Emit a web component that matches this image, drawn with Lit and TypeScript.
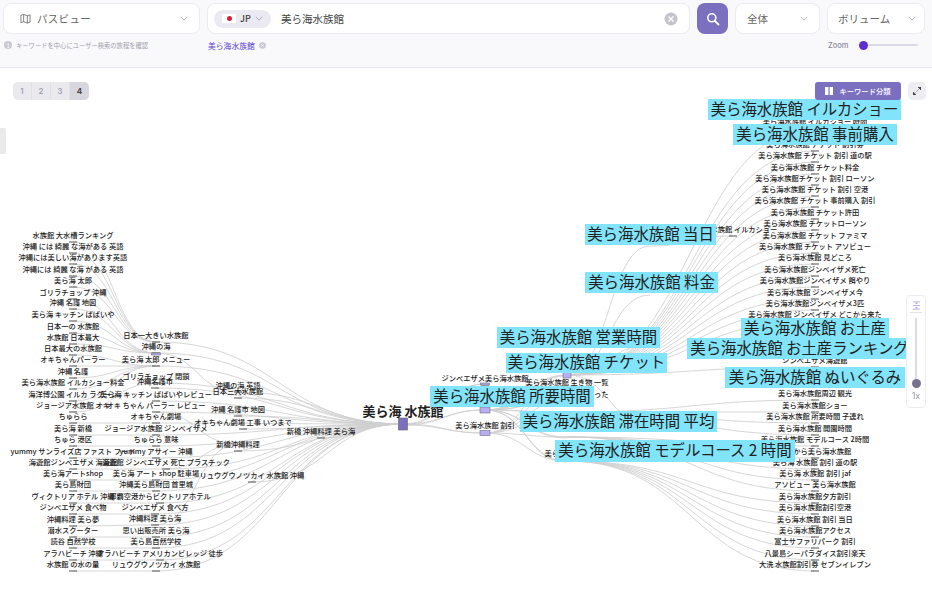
import { LitElement, html, css, svg } from "lit";
import { customElement } from "lit/decorators.js";

type L = [string, number, number, number?];
// text, centre x, label y, bar width
const col1: L[] = [
  ["水族館 大水槽ランキング",73,235],["沖縄 には 綺麗 な海がある 英語",73,246],["沖縄には美しい海があります英語",73,257],["沖縄には 綺麗 な海 がある 英語",73,269],
  ["美ら海 太郎",73,280],["ゴリラチョップ 沖縄",73,292],["沖縄 名護 地図",73,302],["美ら海 キッチン ばばいや",73,314],
  ["日本一の 水族館",73,326],["水族館 日本最大",73,337],["日本最大の水族館",73,348],["オキちゃんパーラー",73,359],
  ["沖縄 名護",73,371],["美ら海水族館 イルカショー料金",73,382],["海洋博公園 イルカ ラグーン",73,394],["ジョージア水族館 オキ",73,405],
  ["ちゅらら",73,416],["美ら海 新橋",73,428],["ちゅら 港区",73,439],["yummy サンライズ店 ファスト フード",73,451],
  ["海遊館ジンベエザメ 海遊館",73,462],["美ら海アートshop",73,473],["美ら島財団",73,484],["ヴィクトリア ホテル 沖縄",73,496],
  ["ジンベエザメ 食べ物",73,507],["沖縄料理 美ら夢",73,519],["潜水スクーター",73,530],["読谷 自然学校",73,541],
  ["アラハビーチ 沖縄",73,553],["水族館 の水の量",73,564],
];
const col2: L[] = [
  ["日本一大きい水族館",156,335],["沖縄の海",156,346],["美ら海 太郎 メニュー",156,359],["ゴリラチョップ 閉鎖",156,376],
  ["沖縄名護市",155,381],["美ら海 キッチン ばばいやレビュー",156,394],["オキ ちゃん パーラー レビュー",156,405],["オキちゃん劇場",156,416],
  ["ジョージア水族館 ジンベイザメ",156,428],["ちゅらら 意味",156,439],["yummy アサイー 沖縄",156,451],["海遊館 ジンベエザメ 死亡 プラスチック",166,462],
  ["美ら海 アート shop 駐車場",156,473],["沖縄美ら島財団 首里城",156,484],["那覇空港からビクトリアホテル",160,496],["ジンベエザメ 食べ方",155,507],
  ["沖縄料理 美ら海",155,518],["思い出販売所 美ら海",156,530],["美ら島自然学校",156,541],["アラハビーチ アメリカンビレッジ 徒歩",160,553],["リュウグウノツカイ 水族館",156,564],
];
const col3: L[] = [
  ["沖縄の海 英語",238,385],["日本三大水族館",238,391],["沖縄 名護市 地図",238,409],["オキちゃん劇場 工事 いつまで",243,422],
  ["新橋沖縄料理",238,444],["リュウグウノツカイ 水族館 沖縄",252,475],
];
const col6: L[] = [
  ["美ら海水族館 イルカショー 時間",815,121],["美ら海水族館 チケット 割引券",815,144],["美ら海水族館 チケット 割引 道の駅",815,155],["美ら海水族館 チケット料金",815,167],
  ["美ら海水族館チケット 割引 ローソン",815,178],["美ら海水族館 チケット 割引 空港",815,189],["美ら海水族館 チケット 事前購入 割引",815,200],["美ら海水族館 チケット許田",815,212],
  ["美ら海水族館 チケットローソン",815,223],["美ら海水族館 チケット ファミマ",815,235],["美ら海水族館 チケット アソビュー",815,246],["美ら海水族館 見どころ",815,257],
  ["美ら海水族館ジンベイザメ死亡",815,269],["美ら海水族館ジンベイザメ 餌やり",815,280],["美ら海水族館 ジンベイザメ今",815,292],["美ら海水族館ジンベイザメ3匹",815,303],
  ["美ら海水族館 ジンベイザメ どこから来た",815,314],["ジンベエザメ海遊館",815,360],["美ら海水族館周辺 観光",815,393],["美ら海水族館ショー",815,405],
  ["美ら海水族館 所要時間 子連れ",815,416],["美ら海水族館 開園時間",815,428],["美ら海水族館 モデルコース 2時間",815,439],["那覇から美ら海水族館",815,451],
  ["美ら海 水族館 割引 道の駅",815,462],["美ら海 水族館 割引 jaf",815,473],["アソビュー 美ら海水族館",815,484],["美ら海水族館夕方割引",815,496],
  ["美ら海水族館割引空港",815,507],["美ら海水族館 割引 当日",815,519],["美ら海水族館アクセス",815,530],["富士サファリパーク 割引",815,541],
  ["八景島シーパラダイス割引楽天",815,553],["大洗 水族館割引券 セブンイレブン",815,564],
];
const misc: L[] = [
  ["新橋 沖縄料理 美ら海",321,431],["ジンベエザメ美ら海水族館",485,378],["美ら海水族館 割引",485,425],
  ["美ら海水族館 生き物 一覧",567,382],["ジンベエザメ 減った",575,394],["美ら海 水族館",567,453],["美ら海水族館 イルカショー",733,229],
];
// text, left, top, width, height
const hl: [string, number, number, number, number][] = [
  ["美ら海水族館 イルカショー",708,99,193,21],["美ら海水族館 事前購入",733,124,164,21],["美ら海水族館 当日",585,224,131,21],
  ["美ら海水族館 料金",585,272,133,21],["美ら海水族館 営業時間",497,327,163,21],["美ら海水族館 チケット",506,353,161,20],
  ["美ら海水族館 お土産",741,318,148,21],["美ら海水族館 お土産ランキング",687,338,225,21],["美ら海水族館 ぬいぐるみ",725,367,180,21],
  ["美ら海水族館 所要時間",430,386,164,21],["美ら海水族館 滞在時間 平均",520,411,197,21],["美ら海水族館 モデルコース 2 時間",555,440,240,22],
];

const link = (x0: number, y0: number, x1: number, y1: number) => {
  const m = (x0 + x1) / 2;
  return `M${x0},${y0}C${m},${y0} ${m},${y1} ${x1},${y1}`;
};
const paths: string[] = [];
const MAIN: [number, number] = [403, 424];
const by = (n: L) => n[2] + 7;

// left side: outer column to second column
col1.forEach((n, i) => {
  const lower = i >= 16;
  const t = lower ? col2[Math.min(i - 9, col2.length - 1)] : col2[Math.min(Math.floor(i / 5), 6)];
  paths.push(link(t[1], by(t), n[1], by(n)));
});
// second column to third column or root
col2.forEach((n, i) => {
  if (i % 5 === 1) paths.push(link(238, 392 + (i > 5 ? 52 : 0), n[1], by(n)));
  paths.push(link(MAIN[0], MAIN[1], n[1], by(n)));
});
col3.forEach((n) => paths.push(link(MAIN[0], MAIN[1], n[1], by(n))));
paths.push(link(MAIN[0], MAIN[1], 321, 438));
// right side
[[485, 384], [485, 410], [485, 433]].forEach(([x, y]) => {
  paths.push(link(MAIN[0], MAIN[1], x, y));
  paths.push(link(MAIN[0], MAIN[1] + 1, x, y));
});
[375, 388, 400, 412, 437, 461].forEach((y) => {
  paths.push(link(485, 410, 567, y), link(485, 410, 567, y + 1), link(485, 433, 567, y));
});
col6.forEach((n) => {
  const y = by(n);
  const src = y < 380 ? 375 : y < 440 ? 412 : y < 500 ? 437 : 461;
  paths.push(link(567, src, 815, y));
});
[[650, 246], [650, 295], [650, 345], [650, 424]].forEach(([x, y]) => paths.push(link(567, 375, x, y)));
paths.push(link(650, 246, 733, 236));

const bars = [...col1, ...col2, ...col3, ...col6, ...misc];

const chevron = html`<svg class="chev" viewBox="0 0 10 6"><path d="M1 1l4 4 4-4" fill="none" stroke="currentColor" stroke-width="1"/></svg>`;

@customElement("app-root")
export class AppRoot extends LitElement {
  static styles = css`
    :host { display: block; width: 932px; height: 600px; position: relative; overflow: hidden; background: #fff;
      font-family: "Noto Sans CJK JP", "Noto Sans", sans-serif; color: #555; }
    .head { height: 68px; box-sizing: border-box; background: #f9f9fb; border-bottom: 1px solid #e6e6f0; padding: 3px 7px 0 3px; display: flex; flex-direction: column; gap: 4px; }
    .row { display: flex; gap: 7px; height: 31px; }
    .box { box-sizing: border-box; background: #fff; border: 1px solid #ebebf1; border-radius: 8px; display: flex; align-items: center; font-size: 10.5px; color: #666; }
    .chev { width: 8px; height: 5px; color: #9c9ca8; flex: none; }
    .view { width: 197px; padding: 0 11px 0 16px; gap: 6px; }
    .view span { flex: 1; letter-spacing: .3px; }
    .view svg.map { width: 11px; height: 11px; color: #777; }
    .search { width: 483px; padding: 0 11px 0 6px; gap: 10px; }
    .chip { width: 57px; height: 18px; border-radius: 9px; background: #ebe9f1; display: flex; align-items: center; justify-content: center; gap: 4px; font-size: 9px; font-weight: 500; color: #444; flex: none; }
    .flag { width: 14px; height: 9px; background: #fff; display: flex; align-items: center; justify-content: center; }
    .flag i { width: 5px; height: 5px; border-radius: 50%; background: #d81e3a; }
    .q { flex: 1; color: #444; }
    .clear { width: 14px; height: 14px; }
    .go { width: 31px; height: 31px; border-radius: 8px; background: #7b6fbf; display: flex; align-items: center; justify-content: center; flex: none; }
    .go svg { width: 14px; height: 14px; }
    .all { width: 85px; padding: 0 11px; justify-content: space-between; }
    .vol { width: 98px; padding: 0 8px 0 10px; justify-content: space-between; }
    .sub { display: flex; height: 14px; align-items: center; }
    .hint { width: 204px; display: flex; align-items: center; gap: 4px; font-size: 6.3px; color: #a0a0ab; padding-left: 1px; }
    .dot { width: 8px; height: 8px; border-radius: 50%; background: #c9c9d2; color: #fff; font-size: 6px; font-weight: 700; display: flex; align-items: center; justify-content: center; flex: none; }
    .tag { width: 620px; display: flex; align-items: center; gap: 4px; font-size: 7.8px; color: #5b3fd0; }
    .tagx { width: 7px; height: 7px; }
    .zoom { display: flex; align-items: center; gap: 10px; font-size: 7.5px; font-weight: 500; color: #8b8b99; font-family: "Inter", sans-serif; }
    .track { width: 59px; height: 2px; border-radius: 1px; background: #dcdae8; position: relative; }
    .track i { position: absolute; left: 0; top: -3.5px; width: 9px; height: 9px; border-radius: 50%; background: #5b2fd0; }
    .canvas { position: absolute; left: 0; top: 0; width: 932px; height: 600px; }
    .tabs { position: absolute; left: 13px; top: 82px; display: flex; height: 18px; border-radius: 5px; overflow: hidden; background: #e9e9ee; font-size: 8px; font-weight: 500; color: #9a9aa5; font-family: "Inter", sans-serif; }
    .tabs span { width: 19px; display: flex; align-items: center; justify-content: center; border-right: 1px solid #e0e0e6; box-sizing: border-box; }
    .tabs .on { background: #d8d7df; color: #444; font-weight: 700; border: 0; }
    .kw { position: absolute; left: 815px; top: 82px; width: 86px; height: 18px; border-radius: 3px; background: #7b6fbf; color: #eceaf8; font-size: 7.3px; font-weight: 700; display: flex; align-items: center; justify-content: center; gap: 6px; }
    .kw svg { width: 8px; height: 8px; }
    .exp { position: absolute; left: 908px; top: 82px; width: 18px; height: 18px; border-radius: 5px; background: #eeedf2; display: flex; align-items: center; justify-content: center; }
    .exp svg { width: 8px; height: 8px; }
    .drawer { position: absolute; left: 0; top: 128px; width: 6px; height: 26px; background: #e9e9ee; border-radius: 0 2px 2px 0; }
    .vz { position: absolute; left: 906px; top: 295px; width: 20px; height: 113px; box-sizing: border-box; background: #fff; border: 1px solid #ececf2; border-radius: 4px; display: flex; flex-direction: column; align-items: center; padding-top: 5px; }
    .vz svg { width: 9px; height: 9px; }
    .vz hr { width: 12px; border: 0; border-top: 1px solid #e3e3ea; margin: 2px 0 5px; }
    .vtrack { width: 2px; height: 66px; background: #dcdae8; position: relative; }
    .vtrack i { position: absolute; left: -3.5px; bottom: -4px; width: 9px; height: 9px; border-radius: 50%; background: #76748c; }
    .vz b { font-weight: 400; font-size: 9px; color: #9a9aa5; margin-top: 6px; font-family: "Inter", sans-serif; }
    text { font-family: "Noto Sans CJK JP", "Noto Sans", sans-serif; text-anchor: middle; fill: #222; }
    .lab { font-size: 7.25px; font-weight: 500; }
    .big { font-size: 15.4px; font-weight: 400; }
    .root { font-size: 13px; font-weight: 700; }
    .lk { fill: none; stroke: #cfcfcf; stroke-width: 1; opacity: .85; }
    .bg { fill: #81e4fa; }
  `;

  render() {
    return html`
      <svg class="canvas" viewBox="0 0 932 600">
        ${paths.map((d) => svg`<path class="lk" d=${d}></path>`)}
        ${bars.map((n) => svg`<rect x=${n[1] - 4} y=${by(n) - 0.5} width="8" height="1" fill="#555"></rect>`)}
        ${([[485, 410, 10, 6], [485, 433, 10, 5], [567, 375, 8, 6], [485, 384, 9, 2], [156, 354, 9, 2]] as number[][]).map(
          ([x, y, w, h]) => svg`<rect x=${x - w / 2} y=${y - h / 2} width=${w} height=${h} fill="#b7aff0" stroke="#6d6d80" stroke-width=".6"></rect>`)}
        <rect x="398.5" y="418" width="9" height="12" fill="#7b6fbf" stroke="#666" stroke-width=".6"></rect>
        ${bars.map((n) => svg`<text class="lab" x=${n[1]} y=${n[2] + 2.6}>${n[0]}</text>`)}
        <text class="root" x="403" y="415.5">美ら海 水族館</text>
        ${hl.map(([t, x, y, w, h]) => svg`<rect class="bg" x=${x} y=${y} width=${w} height=${h}></rect><text class="big" x=${x + w / 2} y=${y + h / 2 + 5.4}>${t}</text>`)}
      </svg>

      <div class="head" style="position:relative">
        <div class="row">
          <div class="box view">
            <svg class="map" viewBox="0 0 12 12"><path d="M1 2.5l3-1 4 1.5 3-1v8l-3 1-4-1.500-3 1zM4 1.500v8M8 3v8" fill="none" stroke="currentColor" stroke-width="1"/></svg>
            <span>パスビュー</span>${chevron}
          </div>
          <div class="box search">
            <div class="chip"><div class="flag"><i></i></div>JP${chevron}</div>
            <div class="q">美ら海水族館</div>
            <svg class="clear" viewBox="0 0 14 14"><circle cx="7" cy="7" r="6.500" fill="#c4c4cc"/><path d="M4.500 4.500l5 5M9.500 4.500l-5 5" stroke="#fff" stroke-width="1.400"/></svg>
          </div>
          <div class="go"><svg viewBox="0 0 14 14"><circle cx="5.800" cy="5.800" r="4" fill="none" stroke="#fff" stroke-width="1.600"/><path d="M8.800 8.800l3.700 3.700" stroke="#fff" stroke-width="1.800" stroke-linecap="round"/></svg></div>
          <div class="box all"><span>全体</span>${chevron}</div>
          <div class="box vol"><span>ボリューム</span>${chevron}</div>
        </div>
        <div class="sub">
          <div class="hint"><div class="dot">!</div>キーワードを中心にユーザー検索の旅程を確認</div>
          <div class="tag">美ら海水族館
            <svg class="tagx" viewBox="0 0 8 8"><circle cx="4" cy="4" r="3.800" fill="#c9c9d2"/><path d="M2.600 2.600l2.800 2.800M5.400 2.600l-2.800 2.800" stroke="#fff" stroke-width=".8"/></svg>
          </div>
          <div class="zoom">Zoom<div class="track"><i></i></div></div>
        </div>
      </div>

      <div class="tabs"><span>1</span><span>2</span><span>3</span><span class="on">4</span></div>
      <div class="kw"><svg viewBox="0 0 8 8"><path d="M0 0h3.400v8H0zM4.600 0H8v8H4.600z" fill="#fff"/></svg>キーワード分類</div>
      <div class="exp"><svg viewBox="0 0 8 8"><path d="M5 0h3v3zM0 5l3 3H0zM5.500 2.500L4.500 3.500M2.500 5.500l1-1" fill="#444" stroke="#444" stroke-width=".7"/></svg></div>
      <div class="drawer"></div>
      <div class="vz">
        <svg viewBox="0 0 10 10"><path d="M1 1h8M1 9h8M1 5h8" stroke="#9d93d6" stroke-width=".8"/><path d="M3.500 3L5 1.500 6.500 3zM3.500 7L5 8.500 6.500 7z" fill="#9d93d6"/></svg>
        <hr />
        <div class="vtrack"><i></i></div>
        <b>1x</b>
      </div>
    `;
  }
}
